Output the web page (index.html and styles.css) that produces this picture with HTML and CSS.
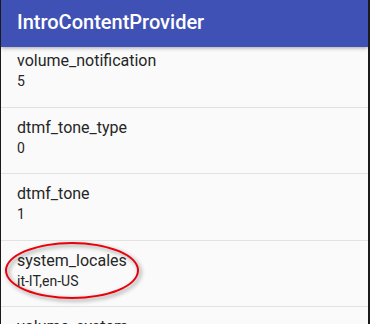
FILE: index.html
```html
<!DOCTYPE html>
<html>
<head>
<meta charset="utf-8">
<link rel="stylesheet" href="styles.css">
</head>
<body>
<div class="screen">
  <header class="appbar"><span class="title">IntroContentProvider</span></header>
  <ul class="list">
    <li class="row"><div class="key">volume_notification</div><div class="val">5</div></li>
    <li class="row"><div class="key">dtmf_tone_type</div><div class="val">0</div></li>
    <li class="row"><div class="key">dtmf_tone</div><div class="val">1</div></li>
    <li class="row marked"><div class="key">system_locales</div><div class="val">it-IT,en-US</div><div class="ring"></div></li>
    <li class="row"><div class="key">volume_system</div><div class="val">7</div></li>
  </ul>
</div>
</body>
</html>
```
FILE: styles.css
```css
html, body {
  margin: 0;
  padding: 0;
}
body {
  width: 370px;
  height: 324px;
  overflow: hidden;
  font-family: Roboto, "Noto Sans", sans-serif;
  background: #fafafa;
}
.screen {
  box-sizing: border-box;
  width: 370px;
  height: 324px;
  border-left: 1px solid #1a1a1a;
  border-right: 2px solid #1a1a1a;
  overflow: hidden;
  background: #fafafa;
}
.appbar {
  position: relative;
  z-index: 2;
  height: 47px;
  background: #3f51b5;
  box-shadow: 0 1px 4px rgba(0,0,0,0.35);
  display: flex;
  align-items: center;
  padding-left: 16px;
}
.title {
  color: #ffffff;
  font-size: 20px;
  font-weight: 500;
  line-height: 24px;
  margin-top: -3px;
}
.list {
  list-style: none;
  margin: -6px 0 0 0;
  padding: 0;
}
.row {
  position: relative;
  box-sizing: border-box;
  height: 66.5px;
  padding: 10px 16px 0 16px;
  border-bottom: 1px solid #e2e2e2;
}
.key {
  font-size: 16px;
  line-height: 20px;
  color: #262626;
}
.val {
  font-size: 14px;
  line-height: 20px;
  color: #262626;
}
.ring {
  position: absolute;
  left: 4px;
  top: 1px;
  width: 134px;
  height: 57px;
  box-sizing: border-box;
  border: 2px solid #e8000b;
  border-radius: 50%;
  filter: drop-shadow(2px 2px 2px rgba(0,0,0,0.45));
}
```
